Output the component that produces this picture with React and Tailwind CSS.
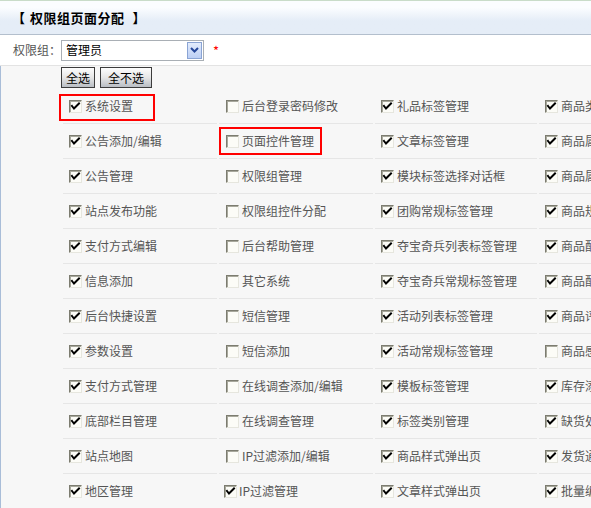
import React from "react";

const columns = [
  {
    pad: "pl-[6px]",
    items: [
      ["系统设置", true],
      ["公告添加/编辑", true],
      ["公告管理", true],
      ["站点发布功能", true],
      ["支付方式编辑", true],
      ["信息添加", true],
      ["后台快捷设置", true],
      ["参数设置", true],
      ["支付方式管理", true],
      ["底部栏目管理", true],
      ["站点地图", true],
      ["地区管理", true],
    ],
  },
  {
    pad: "pl-[7px]",
    items: [
      ["后台登录密码修改", false],
      ["页面控件管理", false],
      ["权限组管理", false],
      ["权限组控件分配", false],
      ["后台帮助管理", false],
      ["其它系统", false],
      ["短信管理", false],
      ["短信添加", false],
      ["在线调查添加/编辑", false],
      ["在线调查管理", false],
      ["IP过滤添加/编辑", false],
      ["IP过滤管理", true],
    ],
  },
  {
    pad: "pl-[6px]",
    items: [
      ["礼品标签管理", true],
      ["文章标签管理", true],
      ["模块标签选择对话框", true],
      ["团购常规标签管理", true],
      ["夺宝奇兵列表标签管理", true],
      ["夺宝奇兵常规标签管理", true],
      ["活动列表标签管理", true],
      ["活动常规标签管理", true],
      ["模板标签管理", true],
      ["标签类别管理", true],
      ["商品样式弹出页", true],
      ["文章样式弹出页", true],
    ],
  },
  {
    pad: "pl-[6px]",
    items: [
      ["商品类别管理", true],
      ["商品属性管理", true],
      ["商品属性添加", true],
      ["商品规格管理", true],
      ["商品配件管理", true],
      ["商品配送管理", true],
      ["商品评论管理", true],
      ["商品感兴趣", false],
      ["库存添加", true],
      ["缺货处理", true],
      ["发货通知", true],
      ["批量编辑", true],
    ],
  },
];

// red annotation boxes: [col-row]
const marks = {
  "0-0": "left-[-4px] top-[5px] w-[96px] h-[27px]",
  "1-1": "left-[0px] top-[3px] w-[103px] h-[28px]",
};

const Checkbox = ({ checked }) => (
  <span className="relative w-[13px] h-[13px] shrink-0 border border-t-[#7c7c70] border-l-[#7c7c70] border-r-[#e6e6de] border-b-[#e6e6de] bg-[#fcfcf7] shadow-[inset_1px_1px_0_#a8a89c]">
    {checked && (
      <svg viewBox="0 0 11 11" className="absolute inset-0 w-[11px] h-[11px]">
        <path d="M2 5 L4 7.5 L9 2.5" fill="none" stroke="#000" strokeWidth="2" strokeLinecap="square" />
      </svg>
    )}
  </span>
);

const Button = ({ children, w }) => (
  <button className={`${w} h-[21px] border border-[#3c3c3c] bg-gradient-to-b from-[#fdfdfd] via-[#e6e6e6] to-[#b9bec4] text-[12px] leading-none text-black`}>
    {children}
  </button>
);

export default function App() {
  const rows = columns[0].items.map((_, r) => r);
  return (
    <div className="w-[591px] h-[508px] overflow-hidden bg-[#f7f7f7] font-['Noto_Sans_CJK_SC','Noto_Sans',sans-serif]">
      <div className="h-px bg-[#c9dcc9]" />
      <div className="h-[34px] flex items-center pl-[12px] bg-gradient-to-b from-[#fbfdff] from-20% to-[#e5edf7] to-60% border-b border-[#b3bfcd] text-[13px] font-bold text-black">
        <span>【</span>
        <span className="ml-[5px] tracking-[0.5px]">权限组页面分配</span>
        <span className="ml-[8px]">】</span>
      </div>
      <div className="h-[31px] flex items-center bg-white border-b border-[#e3e3e3]">
        <span className="pl-[13px] w-[61px] text-[12px] text-[#555]">权限组：</span>
        <div className="w-[143px] h-[21px] border border-[#a9afb5] bg-white flex items-center justify-between pl-[4px] pr-[1px]">
          <span className="text-[12px] text-black">管理员</span>
          <span className="w-[15px] h-[17px] border border-[#8aa4d4] bg-gradient-to-b from-[#e3ecfc] to-[#bccff5] flex items-center justify-center">
            <svg viewBox="0 0 9 6" className="w-[9px] h-[6px]">
              <path d="M1 1 L4.5 4.5 L8 1" fill="none" stroke="#26479a" strokeWidth="2" />
            </svg>
          </span>
        </div>
        <span className="ml-[9px] text-[13px] text-[#ff0000] leading-none">*</span>
      </div>
      <div className="border-l border-[#a9bdd8] h-full">
        <div className="flex gap-[5px] pl-[60px] pt-[1px] h-[23px]">
          <Button w="w-[34px]">全选</Button>
          <Button w="w-[52px]">全不选</Button>
        </div>
        <div className="ml-[62px] grid grid-cols-[154px_154px_162px_160px] gap-x-[2px]">
          {rows.map((r) =>
            columns.map((col, c) => {
              const [label, checked] = col.items[r];
              const mark = marks[`${c}-${r}`];
              return (
                <div
                  key={`${c}-${r}`}
                  className={`relative h-[35px] flex items-center gap-[3px] border-b border-[#e6e6e6] whitespace-nowrap ${
                    c === 1 && r === 11 ? "pl-[5px]" : col.pad
                  }`}
                >
                  <Checkbox checked={checked} />
                  <span className={`text-[12px] text-[#555] ${c === 1 && r === 11 ? "ml-[-1px]" : ""}`}>{label}</span>
                  {mark && <span className={`absolute border-2 border-[#ff0000] ${mark}`} />}
                </div>
              );
            })
          )}
        </div>
      </div>
    </div>
  );
}
